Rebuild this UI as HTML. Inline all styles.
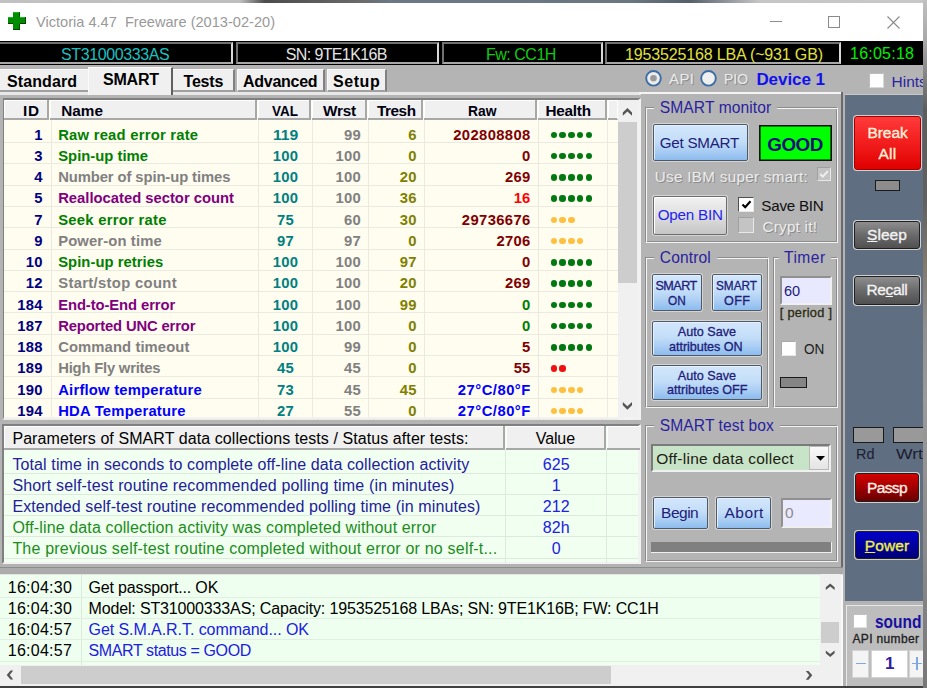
<!DOCTYPE html>
<html><head><meta charset="utf-8"><style>
*{margin:0;padding:0;box-sizing:border-box}
html,body{width:927px;height:688px;overflow:hidden;background:#8f9296}
body{position:relative;font-family:"Liberation Sans",sans-serif}
.a{position:absolute}
.t{position:absolute;white-space:pre;line-height:1}
svg{position:absolute;overflow:visible}
</style></head><body>
<div class="a" style="left:0px;top:0px;width:927px;height:3px;background:linear-gradient(90deg,#c2c2c2 0px,#bebebe 240px,#4c4c4c 265px,#6a6a6a 360px,#6c7886 390px,#6a7682 630px,#56606a 690px,#c6c6c6 760px,#c8c8c8 927px)"></div>
<div class="a" style="left:0px;top:3px;width:923px;height:683px;background:#b4b4b4"></div>
<div class="a" style="left:0px;top:686px;width:923px;height:2px;background:#404040"></div>
<div class="a" style="left:0px;top:3px;width:923px;height:38px;background:#fff"></div>
<div class="a" style="left:13px;top:12px;width:7px;height:18px;background:#008c00"></div>
<div class="a" style="left:8px;top:17px;width:18px;height:7px;background:#008c00"></div>
<div class="a" style="left:13px;top:12px;width:6px;height:1px;background:#18b818"></div>
<div class="a" style="left:8px;top:17px;width:5px;height:1px;background:#18b818"></div>
<div class="a" style="left:20px;top:17px;width:5px;height:1px;background:#18b818"></div>
<div class="a" style="left:19px;top:12px;width:1px;height:5px;background:#005000"></div>
<div class="a" style="left:19px;top:24px;width:1px;height:6px;background:#005000"></div>
<div class="a" style="left:13px;top:29px;width:7px;height:1px;background:#004000"></div>
<div class="a" style="left:8px;top:23px;width:5px;height:1px;background:#004000"></div>
<div class="a" style="left:20px;top:23px;width:6px;height:1px;background:#004000"></div>
<div class="a" style="left:25px;top:17px;width:1px;height:7px;background:#004800"></div>
<div class="t" style="left:36.00px;top:15.00px;font-size:14.6px;font-weight:normal;color:#999;letter-spacing:-0.001px;">Victoria 4.47  Freeware (2013-02-20)</div>
<div class="a" style="left:770px;top:21px;width:12px;height:1px;background:#8a8a8a"></div>
<div class="a" style="left:828px;top:16px;width:12px;height:12px;border:1px solid #8a8a8a"></div>
<svg style="left:887px;top:16px" width="13" height="13"><path d="M0.5 0.5L12.5 12.5M12.5 0.5L0.5 12.5" stroke="#8a8a8a" stroke-width="1.1"/></svg>
<div class="a" style="left:0px;top:41px;width:923px;height:24px;background:#000"></div>
<div class="a" style="left:-2px;top:42px;width:235px;height:22px;border-top:2px solid #707070;border-left:2px solid #707070;border-bottom:2px solid #a8a8a8;border-right:2px solid #d8d8d8"></div>
<div class="t" style="left:61.00px;top:47.00px;font-size:16px;font-weight:normal;color:#1cc0c0;letter-spacing:-0.380px;">ST31000333AS</div>
<div class="a" style="left:236px;top:42px;width:203px;height:22px;border-top:2px solid #707070;border-left:2px solid #707070;border-bottom:2px solid #a8a8a8;border-right:2px solid #d8d8d8"></div>
<div class="t" style="left:285.80px;top:47.00px;font-size:16px;font-weight:normal;color:#e4e4e4;letter-spacing:-0.627px;">SN: 9TE1K16B</div>
<div class="a" style="left:442px;top:42px;width:161px;height:22px;border-top:2px solid #707070;border-left:2px solid #707070;border-bottom:2px solid #a8a8a8;border-right:2px solid #d8d8d8"></div>
<div class="t" style="left:486.00px;top:47.00px;font-size:16px;font-weight:normal;color:#10cc10;letter-spacing:-0.483px;">Fw: CC1H</div>
<div class="a" style="left:605px;top:42px;width:236px;height:22px;border-top:2px solid #707070;border-left:2px solid #707070;border-bottom:2px solid #a8a8a8;border-right:2px solid #d8d8d8"></div>
<div class="t" style="left:625.00px;top:47.00px;font-size:16px;font-weight:normal;color:#e0e040;letter-spacing:-0.152px;">1953525168 LBA (~931 GB)</div>
<div class="t" style="left:850.00px;top:46.00px;font-size:16px;font-weight:normal;color:#00f000;letter-spacing:0.246px;">16:05:18</div>
<div class="a" style="left:0px;top:68.5px;width:89px;height:23.5px;background:#f0f0f0;border-bottom:2px solid #a0a0a0;border-top:1px solid #fafafa"></div>
<div class="t" style="left:7.00px;top:74.00px;font-size:16px;font-weight:bold;color:#000;letter-spacing:0.094px;">Standard</div>
<div class="a" style="left:172px;top:69px;width:63px;height:23px;background:#f0f0f0;border-bottom:2px solid #a0a0a0;border-right:2px solid #808080;border-top:1px solid #fafafa;border-left:1px solid #fafafa"></div>
<div class="t" style="left:183.60px;top:74.00px;font-size:16px;font-weight:bold;color:#000;letter-spacing:-0.227px;">Tests</div>
<div class="a" style="left:237px;top:69px;width:88px;height:23px;background:#f0f0f0;border-bottom:2px solid #a0a0a0;border-right:2px solid #808080;border-top:1px solid #fafafa;border-left:1px solid #fafafa"></div>
<div class="t" style="left:243.00px;top:74.00px;font-size:16px;font-weight:bold;color:#000;letter-spacing:-0.267px;">Advanced</div>
<div class="a" style="left:327px;top:69px;width:60px;height:23px;background:#f0f0f0;border-bottom:2px solid #a0a0a0;border-right:2px solid #808080;border-top:1px solid #fafafa;border-left:1px solid #fafafa"></div>
<div class="t" style="left:333.00px;top:74.00px;font-size:16px;font-weight:bold;color:#000;letter-spacing:0.562px;">Setup</div>
<div class="a" style="left:0px;top:92px;width:843px;height:3px;background:#e8e8e8"></div>
<div class="a" style="left:88px;top:66.5px;width:85px;height:28.5px;background:#f0f0f0;border-right:2px solid #606060;border-top:1px solid #fafafa;border-left:1px solid #fafafa"></div>
<div class="t" style="left:103.00px;top:72.00px;font-size:16px;font-weight:bold;color:#000;letter-spacing:-0.223px;">SMART</div>
<div class="a" style="left:0px;top:95px;width:641px;height:329px;background:#b4b4b4"></div>
<div class="a" style="left:3px;top:98px;width:638px;height:322px;border-top:2px solid #808080;border-left:1px solid #808080;border-right:3px solid #f2f2f2;border-bottom:3px solid #f2f2f2"></div>
<div class="a" style="left:4px;top:100px;width:614px;height:317px;background:#fffcf0"></div>
<div class="a" style="left:4px;top:100px;width:45px;height:20px;background:#f0f0f0;border-right:2px solid #a8a8a8;border-bottom:2px solid #a8a8a8;box-shadow:inset 1px 1px 0 #fff"></div>
<div class="a" style="left:50px;top:100px;width:207px;height:20px;background:#f0f0f0;border-right:2px solid #a8a8a8;border-bottom:2px solid #a8a8a8;box-shadow:inset 1px 1px 0 #fff"></div>
<div class="a" style="left:258px;top:100px;width:53px;height:20px;background:#f0f0f0;border-right:2px solid #a8a8a8;border-bottom:2px solid #a8a8a8;box-shadow:inset 1px 1px 0 #fff"></div>
<div class="a" style="left:312px;top:100px;width:55px;height:20px;background:#f0f0f0;border-right:2px solid #a8a8a8;border-bottom:2px solid #a8a8a8;box-shadow:inset 1px 1px 0 #fff"></div>
<div class="a" style="left:368px;top:100px;width:55px;height:20px;background:#f0f0f0;border-right:2px solid #a8a8a8;border-bottom:2px solid #a8a8a8;box-shadow:inset 1px 1px 0 #fff"></div>
<div class="a" style="left:424px;top:100px;width:113px;height:20px;background:#f0f0f0;border-right:2px solid #a8a8a8;border-bottom:2px solid #a8a8a8;box-shadow:inset 1px 1px 0 #fff"></div>
<div class="a" style="left:538px;top:100px;width:69px;height:20px;background:#f0f0f0;border-right:2px solid #a8a8a8;border-bottom:2px solid #a8a8a8;box-shadow:inset 1px 1px 0 #fff"></div>
<div class="a" style="left:608px;top:100px;width:10px;height:20px;background:#f0f0f0;border-right:2px solid #a8a8a8;border-bottom:2px solid #a8a8a8;box-shadow:inset 1px 1px 0 #fff;border-right:1px solid #fff"></div>
<div class="t" style="left:23.00px;top:103.00px;font-size:15.3px;font-weight:bold;color:#000010;letter-spacing:0.688px;">ID</div>
<div class="t" style="left:61.25px;top:103.00px;font-size:15.3px;font-weight:bold;color:#000010;letter-spacing:0.000px;">Name</div>
<div class="t" style="left:272.00px;top:103.00px;font-size:15.3px;font-weight:bold;color:#000010;letter-spacing:0.000px;transform:scaleX(0.8823);transform-origin:0 0;">VAL</div>
<div class="t" style="left:323.00px;top:103.00px;font-size:15.3px;font-weight:bold;color:#000010;letter-spacing:-0.240px;">Wrst</div>
<div class="t" style="left:377.00px;top:103.00px;font-size:15.3px;font-weight:bold;color:#000010;letter-spacing:-0.453px;">Tresh</div>
<div class="t" style="left:467.50px;top:103.00px;font-size:15.3px;font-weight:bold;color:#000010;letter-spacing:0.000px;transform:scaleX(0.9061);transform-origin:0 0;">Raw</div>
<div class="t" style="left:545.50px;top:103.00px;font-size:15.3px;font-weight:bold;color:#000010;letter-spacing:-0.250px;">Health</div>
<div class="a" style="left:51px;top:120px;width:1px;height:297px;background:#ebeae0"></div>
<div class="a" style="left:258px;top:120px;width:1px;height:297px;background:#ebeae0"></div>
<div class="a" style="left:312px;top:120px;width:1px;height:297px;background:#ebeae0"></div>
<div class="a" style="left:368px;top:120px;width:1px;height:297px;background:#ebeae0"></div>
<div class="a" style="left:424px;top:120px;width:1px;height:297px;background:#ebeae0"></div>
<div class="a" style="left:538px;top:120px;width:1px;height:297px;background:#ebeae0"></div>
<div class="a" style="left:607px;top:120px;width:1px;height:297px;background:#ebeae0"></div>
<div class="a" style="left:4px;top:141.9px;width:614px;height:1.0px;background:#ebeae0"></div>
<div class="t" style="left:34.27px;top:128.00px;font-size:14.8px;font-weight:bold;color:#000080;letter-spacing:0.000px;">1</div>
<div class="t" style="left:58.20px;top:128.00px;font-size:14.8px;font-weight:bold;color:#008000;letter-spacing:0.233px;">Raw read error rate</div>
<div class="t" style="left:272.66px;top:128.00px;font-size:14.8px;font-weight:bold;color:#008080;letter-spacing:0.000px;transform:scaleX(1.0593);transform-origin:0 0;">119</div>
<div class="t" style="left:344.04px;top:128.00px;font-size:14.8px;font-weight:bold;color:#808080;letter-spacing:0.191px;">99</div>
<div class="t" style="left:408.17px;top:128.00px;font-size:14.8px;font-weight:bold;color:#808000;letter-spacing:0.000px;">6</div>
<div class="t" style="left:453.23px;top:128.00px;font-size:14.8px;font-weight:bold;color:#800000;letter-spacing:0.374px;">202808808</div>
<div class="a" style="left:550.6px;top:131.7px;width:6.399999999999977px;height:6.400000000000006px;background:#007a10;border-radius:50%"></div>
<div class="a" style="left:559.4px;top:131.7px;width:6.399999999999977px;height:6.400000000000006px;background:#007a10;border-radius:50%"></div>
<div class="a" style="left:568.2px;top:131.7px;width:6.399999999999977px;height:6.400000000000006px;background:#007a10;border-radius:50%"></div>
<div class="a" style="left:577.0px;top:131.7px;width:6.399999999999977px;height:6.400000000000006px;background:#007a10;border-radius:50%"></div>
<div class="a" style="left:585.8000000000001px;top:131.7px;width:6.399999999999977px;height:6.400000000000006px;background:#007a10;border-radius:50%"></div>
<div class="a" style="left:4px;top:163.22px;width:614px;height:1.0px;background:#ebeae0"></div>
<div class="t" style="left:34.27px;top:149.00px;font-size:14.8px;font-weight:bold;color:#000080;letter-spacing:0.000px;">3</div>
<div class="t" style="left:58.20px;top:149.00px;font-size:14.8px;font-weight:bold;color:#008000;letter-spacing:0.017px;">Spin-up time</div>
<div class="t" style="left:272.66px;top:149.00px;font-size:14.8px;font-weight:bold;color:#008080;letter-spacing:0.293px;">100</div>
<div class="t" style="left:335.41px;top:149.00px;font-size:14.8px;font-weight:bold;color:#808080;letter-spacing:0.293px;">100</div>
<div class="t" style="left:408.17px;top:149.00px;font-size:14.8px;font-weight:bold;color:#808000;letter-spacing:0.000px;">0</div>
<div class="t" style="left:522.07px;top:149.00px;font-size:14.8px;font-weight:bold;color:#800000;letter-spacing:0.000px;">0</div>
<div class="a" style="left:550.6px;top:152.95px;width:6.399999999999977px;height:6.400000000000006px;background:#007a10;border-radius:50%"></div>
<div class="a" style="left:559.4px;top:152.95px;width:6.399999999999977px;height:6.400000000000006px;background:#007a10;border-radius:50%"></div>
<div class="a" style="left:568.2px;top:152.95px;width:6.399999999999977px;height:6.400000000000006px;background:#007a10;border-radius:50%"></div>
<div class="a" style="left:577.0px;top:152.95px;width:6.399999999999977px;height:6.400000000000006px;background:#007a10;border-radius:50%"></div>
<div class="a" style="left:585.8000000000001px;top:152.95px;width:6.399999999999977px;height:6.400000000000006px;background:#007a10;border-radius:50%"></div>
<div class="a" style="left:4px;top:184.54px;width:614px;height:1.0px;background:#ebeae0"></div>
<div class="t" style="left:34.27px;top:170.00px;font-size:14.8px;font-weight:bold;color:#000080;letter-spacing:0.000px;">4</div>
<div class="t" style="left:58.20px;top:170.00px;font-size:14.8px;font-weight:bold;color:#808080;letter-spacing:-0.095px;">Number of spin-up times</div>
<div class="t" style="left:272.66px;top:170.00px;font-size:14.8px;font-weight:bold;color:#008080;letter-spacing:0.293px;">100</div>
<div class="t" style="left:335.41px;top:170.00px;font-size:14.8px;font-weight:bold;color:#808080;letter-spacing:0.293px;">100</div>
<div class="t" style="left:399.74px;top:170.00px;font-size:14.8px;font-weight:bold;color:#808000;letter-spacing:0.191px;">20</div>
<div class="t" style="left:505.01px;top:170.00px;font-size:14.8px;font-weight:bold;color:#800000;letter-spacing:0.293px;">269</div>
<div class="a" style="left:550.6px;top:174.2px;width:6.399999999999977px;height:6.400000000000006px;background:#007a10;border-radius:50%"></div>
<div class="a" style="left:559.4px;top:174.2px;width:6.399999999999977px;height:6.400000000000006px;background:#007a10;border-radius:50%"></div>
<div class="a" style="left:568.2px;top:174.2px;width:6.399999999999977px;height:6.400000000000006px;background:#007a10;border-radius:50%"></div>
<div class="a" style="left:577.0px;top:174.2px;width:6.399999999999977px;height:6.400000000000006px;background:#007a10;border-radius:50%"></div>
<div class="a" style="left:585.8000000000001px;top:174.2px;width:6.399999999999977px;height:6.400000000000006px;background:#007a10;border-radius:50%"></div>
<div class="a" style="left:4px;top:205.85999999999999px;width:614px;height:1.0px;background:#ebeae0"></div>
<div class="t" style="left:34.27px;top:191.00px;font-size:14.8px;font-weight:bold;color:#000080;letter-spacing:0.000px;">5</div>
<div class="t" style="left:58.20px;top:191.00px;font-size:14.8px;font-weight:bold;color:#800080;letter-spacing:-0.007px;">Reallocated sector count</div>
<div class="t" style="left:272.66px;top:191.00px;font-size:14.8px;font-weight:bold;color:#008080;letter-spacing:0.293px;">100</div>
<div class="t" style="left:335.41px;top:191.00px;font-size:14.8px;font-weight:bold;color:#808080;letter-spacing:0.293px;">100</div>
<div class="t" style="left:399.74px;top:191.00px;font-size:14.8px;font-weight:bold;color:#808000;letter-spacing:0.191px;">36</div>
<div class="t" style="left:513.64px;top:191.00px;font-size:14.8px;font-weight:bold;color:#FF0000;letter-spacing:0.191px;">16</div>
<div class="a" style="left:550.6px;top:195.45px;width:6.399999999999977px;height:6.400000000000006px;background:#007a10;border-radius:50%"></div>
<div class="a" style="left:559.4px;top:195.45px;width:6.399999999999977px;height:6.400000000000006px;background:#007a10;border-radius:50%"></div>
<div class="a" style="left:568.2px;top:195.45px;width:6.399999999999977px;height:6.400000000000006px;background:#007a10;border-radius:50%"></div>
<div class="a" style="left:577.0px;top:195.45px;width:6.399999999999977px;height:6.400000000000006px;background:#007a10;border-radius:50%"></div>
<div class="a" style="left:585.8000000000001px;top:195.45px;width:6.399999999999977px;height:6.400000000000006px;background:#007a10;border-radius:50%"></div>
<div class="a" style="left:4px;top:227.18px;width:614px;height:1.0px;background:#ebeae0"></div>
<div class="t" style="left:34.27px;top:213.00px;font-size:14.8px;font-weight:bold;color:#000080;letter-spacing:0.000px;">7</div>
<div class="t" style="left:58.20px;top:213.00px;font-size:14.8px;font-weight:bold;color:#008000;letter-spacing:0.274px;">Seek error rate</div>
<div class="t" style="left:276.97px;top:213.00px;font-size:14.8px;font-weight:bold;color:#008080;letter-spacing:0.191px;">75</div>
<div class="t" style="left:344.04px;top:213.00px;font-size:14.8px;font-weight:bold;color:#808080;letter-spacing:0.191px;">60</div>
<div class="t" style="left:399.74px;top:213.00px;font-size:14.8px;font-weight:bold;color:#808000;letter-spacing:0.191px;">30</div>
<div class="t" style="left:461.86px;top:213.00px;font-size:14.8px;font-weight:bold;color:#800000;letter-spacing:0.371px;">29736676</div>
<div class="a" style="left:550.6px;top:216.7px;width:6.399999999999977px;height:6.400000000000006px;background:#ffc040;border-radius:50%"></div>
<div class="a" style="left:559.4px;top:216.7px;width:6.399999999999977px;height:6.400000000000006px;background:#ffc040;border-radius:50%"></div>
<div class="a" style="left:568.2px;top:216.7px;width:6.399999999999977px;height:6.400000000000006px;background:#ffc040;border-radius:50%"></div>
<div class="a" style="left:4px;top:248.5px;width:614px;height:1.0px;background:#ebeae0"></div>
<div class="t" style="left:34.27px;top:234.00px;font-size:14.8px;font-weight:bold;color:#000080;letter-spacing:0.000px;">9</div>
<div class="t" style="left:58.20px;top:234.00px;font-size:14.8px;font-weight:bold;color:#808080;letter-spacing:0.129px;">Power-on time</div>
<div class="t" style="left:276.97px;top:234.00px;font-size:14.8px;font-weight:bold;color:#008080;letter-spacing:0.191px;">97</div>
<div class="t" style="left:344.04px;top:234.00px;font-size:14.8px;font-weight:bold;color:#808080;letter-spacing:0.191px;">97</div>
<div class="t" style="left:408.17px;top:234.00px;font-size:14.8px;font-weight:bold;color:#808000;letter-spacing:0.000px;">0</div>
<div class="t" style="left:496.38px;top:234.00px;font-size:14.8px;font-weight:bold;color:#800000;letter-spacing:0.333px;">2706</div>
<div class="a" style="left:550.6px;top:237.95px;width:6.399999999999977px;height:6.400000000000006px;background:#ffc040;border-radius:50%"></div>
<div class="a" style="left:559.4px;top:237.95px;width:6.399999999999977px;height:6.400000000000006px;background:#ffc040;border-radius:50%"></div>
<div class="a" style="left:568.2px;top:237.95px;width:6.399999999999977px;height:6.400000000000006px;background:#ffc040;border-radius:50%"></div>
<div class="a" style="left:577.0px;top:237.95px;width:6.399999999999977px;height:6.400000000000006px;background:#ffc040;border-radius:50%"></div>
<div class="a" style="left:4px;top:269.82px;width:614px;height:1.0px;background:#ebeae0"></div>
<div class="t" style="left:25.84px;top:255.00px;font-size:14.8px;font-weight:bold;color:#000080;letter-spacing:0.191px;">10</div>
<div class="t" style="left:58.20px;top:255.00px;font-size:14.8px;font-weight:bold;color:#008000;letter-spacing:0.041px;">Spin-up retries</div>
<div class="t" style="left:272.66px;top:255.00px;font-size:14.8px;font-weight:bold;color:#008080;letter-spacing:0.293px;">100</div>
<div class="t" style="left:335.41px;top:255.00px;font-size:14.8px;font-weight:bold;color:#808080;letter-spacing:0.293px;">100</div>
<div class="t" style="left:399.74px;top:255.00px;font-size:14.8px;font-weight:bold;color:#808000;letter-spacing:0.191px;">97</div>
<div class="t" style="left:522.07px;top:255.00px;font-size:14.8px;font-weight:bold;color:#800000;letter-spacing:0.000px;">0</div>
<div class="a" style="left:550.6px;top:259.20000000000005px;width:6.399999999999977px;height:6.399999999999977px;background:#007a10;border-radius:50%"></div>
<div class="a" style="left:559.4px;top:259.20000000000005px;width:6.399999999999977px;height:6.399999999999977px;background:#007a10;border-radius:50%"></div>
<div class="a" style="left:568.2px;top:259.20000000000005px;width:6.399999999999977px;height:6.399999999999977px;background:#007a10;border-radius:50%"></div>
<div class="a" style="left:577.0px;top:259.20000000000005px;width:6.399999999999977px;height:6.399999999999977px;background:#007a10;border-radius:50%"></div>
<div class="a" style="left:585.8000000000001px;top:259.20000000000005px;width:6.399999999999977px;height:6.399999999999977px;background:#007a10;border-radius:50%"></div>
<div class="a" style="left:4px;top:291.14px;width:614px;height:1.0px;background:#ebeae0"></div>
<div class="t" style="left:25.84px;top:276.00px;font-size:14.8px;font-weight:bold;color:#000080;letter-spacing:0.191px;">12</div>
<div class="t" style="left:58.20px;top:276.00px;font-size:14.8px;font-weight:bold;color:#808080;letter-spacing:0.336px;">Start/stop count</div>
<div class="t" style="left:272.66px;top:276.00px;font-size:14.8px;font-weight:bold;color:#008080;letter-spacing:0.293px;">100</div>
<div class="t" style="left:335.41px;top:276.00px;font-size:14.8px;font-weight:bold;color:#808080;letter-spacing:0.293px;">100</div>
<div class="t" style="left:399.74px;top:276.00px;font-size:14.8px;font-weight:bold;color:#808000;letter-spacing:0.191px;">20</div>
<div class="t" style="left:505.01px;top:276.00px;font-size:14.8px;font-weight:bold;color:#800000;letter-spacing:0.293px;">269</div>
<div class="a" style="left:550.6px;top:280.45000000000005px;width:6.399999999999977px;height:6.399999999999977px;background:#007a10;border-radius:50%"></div>
<div class="a" style="left:559.4px;top:280.45000000000005px;width:6.399999999999977px;height:6.399999999999977px;background:#007a10;border-radius:50%"></div>
<div class="a" style="left:568.2px;top:280.45000000000005px;width:6.399999999999977px;height:6.399999999999977px;background:#007a10;border-radius:50%"></div>
<div class="a" style="left:577.0px;top:280.45000000000005px;width:6.399999999999977px;height:6.399999999999977px;background:#007a10;border-radius:50%"></div>
<div class="a" style="left:585.8000000000001px;top:280.45000000000005px;width:6.399999999999977px;height:6.399999999999977px;background:#007a10;border-radius:50%"></div>
<div class="a" style="left:4px;top:312.46px;width:614px;height:1.0px;background:#ebeae0"></div>
<div class="t" style="left:17.21px;top:298.00px;font-size:14.8px;font-weight:bold;color:#000080;letter-spacing:0.293px;">184</div>
<div class="t" style="left:58.20px;top:298.00px;font-size:14.8px;font-weight:bold;color:#800080;letter-spacing:-0.092px;">End-to-End error</div>
<div class="t" style="left:272.66px;top:298.00px;font-size:14.8px;font-weight:bold;color:#008080;letter-spacing:0.293px;">100</div>
<div class="t" style="left:335.41px;top:298.00px;font-size:14.8px;font-weight:bold;color:#808080;letter-spacing:0.293px;">100</div>
<div class="t" style="left:399.74px;top:298.00px;font-size:14.8px;font-weight:bold;color:#808000;letter-spacing:0.191px;">99</div>
<div class="t" style="left:522.07px;top:298.00px;font-size:14.8px;font-weight:bold;color:#008000;letter-spacing:0.000px;">0</div>
<div class="a" style="left:550.6px;top:301.70000000000005px;width:6.399999999999977px;height:6.399999999999977px;background:#007a10;border-radius:50%"></div>
<div class="a" style="left:559.4px;top:301.70000000000005px;width:6.399999999999977px;height:6.399999999999977px;background:#007a10;border-radius:50%"></div>
<div class="a" style="left:568.2px;top:301.70000000000005px;width:6.399999999999977px;height:6.399999999999977px;background:#007a10;border-radius:50%"></div>
<div class="a" style="left:577.0px;top:301.70000000000005px;width:6.399999999999977px;height:6.399999999999977px;background:#007a10;border-radius:50%"></div>
<div class="a" style="left:585.8000000000001px;top:301.70000000000005px;width:6.399999999999977px;height:6.399999999999977px;background:#007a10;border-radius:50%"></div>
<div class="a" style="left:4px;top:333.78px;width:614px;height:1.0px;background:#ebeae0"></div>
<div class="t" style="left:17.21px;top:319.00px;font-size:14.8px;font-weight:bold;color:#000080;letter-spacing:0.293px;">187</div>
<div class="t" style="left:58.20px;top:319.00px;font-size:14.8px;font-weight:bold;color:#800080;letter-spacing:-0.146px;">Reported UNC error</div>
<div class="t" style="left:272.66px;top:319.00px;font-size:14.8px;font-weight:bold;color:#008080;letter-spacing:0.293px;">100</div>
<div class="t" style="left:335.41px;top:319.00px;font-size:14.8px;font-weight:bold;color:#808080;letter-spacing:0.293px;">100</div>
<div class="t" style="left:408.17px;top:319.00px;font-size:14.8px;font-weight:bold;color:#808000;letter-spacing:0.000px;">0</div>
<div class="t" style="left:522.07px;top:319.00px;font-size:14.8px;font-weight:bold;color:#008000;letter-spacing:0.000px;">0</div>
<div class="a" style="left:550.6px;top:322.95000000000005px;width:6.399999999999977px;height:6.399999999999977px;background:#007a10;border-radius:50%"></div>
<div class="a" style="left:559.4px;top:322.95000000000005px;width:6.399999999999977px;height:6.399999999999977px;background:#007a10;border-radius:50%"></div>
<div class="a" style="left:568.2px;top:322.95000000000005px;width:6.399999999999977px;height:6.399999999999977px;background:#007a10;border-radius:50%"></div>
<div class="a" style="left:577.0px;top:322.95000000000005px;width:6.399999999999977px;height:6.399999999999977px;background:#007a10;border-radius:50%"></div>
<div class="a" style="left:585.8000000000001px;top:322.95000000000005px;width:6.399999999999977px;height:6.399999999999977px;background:#007a10;border-radius:50%"></div>
<div class="a" style="left:4px;top:355.09999999999997px;width:614px;height:1.0px;background:#ebeae0"></div>
<div class="t" style="left:17.21px;top:340.00px;font-size:14.8px;font-weight:bold;color:#000080;letter-spacing:0.293px;">188</div>
<div class="t" style="left:58.20px;top:340.00px;font-size:14.8px;font-weight:bold;color:#808080;letter-spacing:0.094px;">Command timeout</div>
<div class="t" style="left:272.66px;top:340.00px;font-size:14.8px;font-weight:bold;color:#008080;letter-spacing:0.293px;">100</div>
<div class="t" style="left:344.04px;top:340.00px;font-size:14.8px;font-weight:bold;color:#808080;letter-spacing:0.191px;">99</div>
<div class="t" style="left:408.17px;top:340.00px;font-size:14.8px;font-weight:bold;color:#808000;letter-spacing:0.000px;">0</div>
<div class="t" style="left:522.07px;top:340.00px;font-size:14.8px;font-weight:bold;color:#800000;letter-spacing:0.000px;">5</div>
<div class="a" style="left:550.6px;top:344.20000000000005px;width:6.399999999999977px;height:6.399999999999977px;background:#007a10;border-radius:50%"></div>
<div class="a" style="left:559.4px;top:344.20000000000005px;width:6.399999999999977px;height:6.399999999999977px;background:#007a10;border-radius:50%"></div>
<div class="a" style="left:568.2px;top:344.20000000000005px;width:6.399999999999977px;height:6.399999999999977px;background:#007a10;border-radius:50%"></div>
<div class="a" style="left:577.0px;top:344.20000000000005px;width:6.399999999999977px;height:6.399999999999977px;background:#007a10;border-radius:50%"></div>
<div class="a" style="left:585.8000000000001px;top:344.20000000000005px;width:6.399999999999977px;height:6.399999999999977px;background:#007a10;border-radius:50%"></div>
<div class="a" style="left:4px;top:376.42px;width:614px;height:1.0px;background:#ebeae0"></div>
<div class="t" style="left:17.21px;top:361.00px;font-size:14.8px;font-weight:bold;color:#000080;letter-spacing:0.293px;">189</div>
<div class="t" style="left:58.20px;top:361.00px;font-size:14.8px;font-weight:bold;color:#808080;letter-spacing:-0.204px;">High Fly writes</div>
<div class="t" style="left:276.97px;top:361.00px;font-size:14.8px;font-weight:bold;color:#008080;letter-spacing:0.191px;">45</div>
<div class="t" style="left:344.04px;top:361.00px;font-size:14.8px;font-weight:bold;color:#808080;letter-spacing:0.191px;">45</div>
<div class="t" style="left:408.17px;top:361.00px;font-size:14.8px;font-weight:bold;color:#808000;letter-spacing:0.000px;">0</div>
<div class="t" style="left:513.64px;top:361.00px;font-size:14.8px;font-weight:bold;color:#800000;letter-spacing:0.191px;">55</div>
<div class="a" style="left:550.6px;top:365.45000000000005px;width:6.399999999999977px;height:6.399999999999977px;background:#f01010;border-radius:50%"></div>
<div class="a" style="left:559.4px;top:365.45000000000005px;width:6.399999999999977px;height:6.399999999999977px;background:#f01010;border-radius:50%"></div>
<div class="a" style="left:4px;top:397.74px;width:614px;height:1.0px;background:#ebeae0"></div>
<div class="t" style="left:17.21px;top:383.00px;font-size:14.8px;font-weight:bold;color:#000080;letter-spacing:0.293px;">190</div>
<div class="t" style="left:58.20px;top:383.00px;font-size:14.8px;font-weight:bold;color:#0000FF;letter-spacing:0.212px;">Airflow temperature</div>
<div class="t" style="left:276.97px;top:383.00px;font-size:14.8px;font-weight:bold;color:#008080;letter-spacing:0.191px;">73</div>
<div class="t" style="left:344.04px;top:383.00px;font-size:14.8px;font-weight:bold;color:#808080;letter-spacing:0.191px;">45</div>
<div class="t" style="left:399.74px;top:383.00px;font-size:14.8px;font-weight:bold;color:#808000;letter-spacing:0.191px;">45</div>
<div class="t" style="left:457.80px;top:383.00px;font-size:14.8px;font-weight:bold;color:#0000FF;letter-spacing:0.488px;">27°C/80°F</div>
<div class="a" style="left:550.6px;top:386.70000000000005px;width:6.399999999999977px;height:6.399999999999977px;background:#ffc040;border-radius:50%"></div>
<div class="a" style="left:559.4px;top:386.70000000000005px;width:6.399999999999977px;height:6.399999999999977px;background:#ffc040;border-radius:50%"></div>
<div class="a" style="left:568.2px;top:386.70000000000005px;width:6.399999999999977px;height:6.399999999999977px;background:#ffc040;border-radius:50%"></div>
<div class="a" style="left:577.0px;top:386.70000000000005px;width:6.399999999999977px;height:6.399999999999977px;background:#ffc040;border-radius:50%"></div>
<div class="a" style="left:4px;top:419.06px;width:614px;height:1.0px;background:#ebeae0"></div>
<div class="t" style="left:17.21px;top:404.00px;font-size:14.8px;font-weight:bold;color:#000080;letter-spacing:0.293px;">194</div>
<div class="t" style="left:58.20px;top:404.00px;font-size:14.8px;font-weight:bold;color:#0000FF;letter-spacing:0.225px;">HDA Temperature</div>
<div class="t" style="left:276.97px;top:404.00px;font-size:14.8px;font-weight:bold;color:#008080;letter-spacing:0.191px;">27</div>
<div class="t" style="left:344.04px;top:404.00px;font-size:14.8px;font-weight:bold;color:#808080;letter-spacing:0.191px;">55</div>
<div class="t" style="left:408.17px;top:404.00px;font-size:14.8px;font-weight:bold;color:#808000;letter-spacing:0.000px;">0</div>
<div class="t" style="left:457.80px;top:404.00px;font-size:14.8px;font-weight:bold;color:#0000FF;letter-spacing:0.488px;">27°C/80°F</div>
<div class="a" style="left:550.6px;top:407.95000000000005px;width:6.399999999999977px;height:6.399999999999977px;background:#ffc040;border-radius:50%"></div>
<div class="a" style="left:559.4px;top:407.95000000000005px;width:6.399999999999977px;height:6.399999999999977px;background:#ffc040;border-radius:50%"></div>
<div class="a" style="left:568.2px;top:407.95000000000005px;width:6.399999999999977px;height:6.399999999999977px;background:#ffc040;border-radius:50%"></div>
<div class="a" style="left:577.0px;top:407.95000000000005px;width:6.399999999999977px;height:6.399999999999977px;background:#ffc040;border-radius:50%"></div>
<div class="a" style="left:618px;top:100px;width:20px;height:317px;background:#f0f0f0"></div>
<div class="a" style="left:618px;top:121.5px;width:19px;height:161.5px;background:#cdcdcd"></div>
<svg style="left:0;top:0" width="927" height="688"><polygon points="622.80,112.55 627.40,108.05 632.00,112.55 632.00,115.70 627.40,111.55 622.80,115.70" fill="#555"/></svg>
<svg style="left:0;top:0" width="927" height="688"><polygon points="622.80,405.15 627.40,409.65 632.00,405.15 632.00,402.00 627.40,406.15 622.80,402.00" fill="#555"/></svg>
<div class="a" style="left:2px;top:424px;width:639px;height:140px;border-top:2px solid #808080;border-left:2px solid #808080;border-right:3px solid #f2f2f2;border-bottom:2px solid #f2f2f2"></div>
<div class="a" style="left:4px;top:426px;width:634px;height:136px;background:#f0fff0"></div>
<div class="a" style="left:4px;top:426px;width:501px;height:24px;background:#f0f0f0;border-right:2px solid #a8a8a8;border-bottom:2px solid #a8a8a8;box-shadow:inset 1px 1px 0 #fff"></div>
<div class="a" style="left:506px;top:426px;width:100px;height:24px;background:#f0f0f0;border-right:2px solid #a8a8a8;border-bottom:2px solid #a8a8a8;box-shadow:inset 1px 1px 0 #fff"></div>
<div class="a" style="left:607px;top:426px;width:33px;height:24px;background:#f0f0f0;border-right:2px solid #a8a8a8;border-bottom:2px solid #a8a8a8;box-shadow:inset 1px 1px 0 #fff;border-right:0"></div>
<div class="t" style="left:12.40px;top:431.00px;font-size:16px;font-weight:normal;color:#000;letter-spacing:0.077px;">Parameters of SMART data collections tests / Status after tests:</div>
<div class="t" style="left:535.75px;top:431.00px;font-size:16px;font-weight:normal;color:#000;letter-spacing:-0.109px;">Value</div>
<div class="a" style="left:505px;top:450px;width:1px;height:113px;background:#dde9dd"></div>
<div class="a" style="left:606px;top:450px;width:1px;height:113px;background:#dde9dd"></div>
<div class="a" style="left:4px;top:472.8px;width:634px;height:1.0px;background:#dde9dd"></div>
<div class="t" style="left:12.40px;top:457.00px;font-size:16px;font-weight:normal;color:#24209a;letter-spacing:0.121px;">Total time in seconds to complete off-line data collection activity</div>
<div class="t" style="left:542.85px;top:457.00px;font-size:16px;font-weight:normal;color:#2020e0;letter-spacing:0.000px;">625</div>
<div class="a" style="left:4px;top:494.0px;width:634px;height:1.0px;background:#dde9dd"></div>
<div class="t" style="left:12.40px;top:478.00px;font-size:16px;font-weight:normal;color:#24209a;letter-spacing:0.162px;">Short self-test routine recommended polling time (in minutes)</div>
<div class="t" style="left:551.75px;top:478.00px;font-size:16px;font-weight:normal;color:#2020e0;letter-spacing:0.000px;">1</div>
<div class="a" style="left:4px;top:515.2px;width:634px;height:1.0px;background:#dde9dd"></div>
<div class="t" style="left:12.40px;top:499.00px;font-size:16px;font-weight:normal;color:#24209a;letter-spacing:0.102px;">Extended self-test routine recommended polling time (in minutes)</div>
<div class="t" style="left:542.85px;top:499.00px;font-size:16px;font-weight:normal;color:#2020e0;letter-spacing:0.000px;">212</div>
<div class="a" style="left:4px;top:536.4000000000001px;width:634px;height:1.0px;background:#dde9dd"></div>
<div class="t" style="left:12.40px;top:520.00px;font-size:16px;font-weight:normal;color:#1c8c1c;letter-spacing:0.130px;">Off-line data collection activity was completed without error</div>
<div class="t" style="left:542.85px;top:520.00px;font-size:16px;font-weight:normal;color:#2020e0;letter-spacing:0.000px;">82h</div>
<div class="a" style="left:4px;top:557.6px;width:634px;height:1.0px;background:#dde9dd"></div>
<div class="t" style="left:12.40px;top:541.00px;font-size:16px;font-weight:normal;color:#1c8c1c;letter-spacing:0.195px;">The previous self-test routine completed without error or no self-t...</div>
<div class="t" style="left:551.75px;top:541.00px;font-size:16px;font-weight:normal;color:#2020e0;letter-spacing:0.000px;">0</div>
<div class="a" style="left:0px;top:564px;width:843px;height:11px;background:#ababab"></div>
<div class="a" style="left:0px;top:564px;width:843px;height:3px;background:#b2b2b2"></div>
<div class="a" style="left:0px;top:567px;width:843px;height:1px;background:#8c8c8c"></div>
<div class="a" style="left:0px;top:573.5px;width:843px;height:1.5px;background:#e4e4e4"></div>
<div class="a" style="left:0px;top:575px;width:843px;height:111px;background:#f0f0f0"></div>
<div class="a" style="left:841px;top:575px;width:2px;height:111px;background:#f8f8f8"></div>
<div class="a" style="left:0px;top:575px;width:820px;height:90px;background:#efffef"></div>
<div class="a" style="left:81px;top:575px;width:1px;height:90px;background:#dde9dd"></div>
<div class="a" style="left:0px;top:596.8px;width:820px;height:1.0px;background:#e2eee2"></div>
<div class="t" style="left:7.80px;top:580.00px;font-size:16px;font-weight:normal;color:#000;letter-spacing:0.246px;">16:04:30</div>
<div class="t" style="left:88.50px;top:580.00px;font-size:16px;font-weight:normal;color:#000;letter-spacing:-0.159px;">Get passport... OK</div>
<div class="a" style="left:0px;top:618.13px;width:820px;height:1.0px;background:#e2eee2"></div>
<div class="t" style="left:7.80px;top:601.00px;font-size:16px;font-weight:normal;color:#000;letter-spacing:0.246px;">16:04:30</div>
<div class="t" style="left:88.50px;top:601.00px;font-size:16px;font-weight:normal;color:#000;letter-spacing:-0.147px;">Model: ST31000333AS; Capacity: 1953525168 LBAs; SN: 9TE1K16B; FW: CC1H</div>
<div class="a" style="left:0px;top:639.4599999999999px;width:820px;height:1.0px;background:#e2eee2"></div>
<div class="t" style="left:7.80px;top:622.00px;font-size:16px;font-weight:normal;color:#000;letter-spacing:0.246px;">16:04:57</div>
<div class="t" style="left:88.50px;top:622.00px;font-size:16px;font-weight:normal;color:#2020e0;letter-spacing:-0.066px;">Get S.M.A.R.T. command... OK</div>
<div class="a" style="left:0px;top:660.79px;width:820px;height:1.0px;background:#e2eee2"></div>
<div class="t" style="left:7.80px;top:643.00px;font-size:16px;font-weight:normal;color:#000;letter-spacing:0.246px;">16:04:57</div>
<div class="t" style="left:88.50px;top:643.00px;font-size:16px;font-weight:normal;color:#2020e0;letter-spacing:-0.383px;">SMART status = GOOD</div>
<div class="a" style="left:821px;top:574px;width:19px;height:91px;background:#f0f0f0"></div>
<div class="a" style="left:821px;top:622.3px;width:18px;height:20.5px;background:#cdcdcd"></div>
<svg style="left:0;top:0" width="927" height="688"><polygon points="825.80,587.20 830.20,583.40 834.60,587.20 834.60,589.90 830.20,586.40 825.80,589.90" fill="#555"/></svg>
<svg style="left:0;top:0" width="927" height="688"><polygon points="825.80,653.30 830.20,657.10 834.60,653.30 834.60,650.60 830.20,654.10 825.80,650.60" fill="#555"/></svg>
<div class="a" style="left:0px;top:665px;width:841px;height:20px;background:#f0f0f0"></div>
<div class="a" style="left:21.4px;top:666px;width:589.6px;height:18px;background:#cdcdcd"></div>
<svg style="left:0;top:0" width="927" height="688"><polygon points="10.50,670.60 6.70,675.00 10.50,679.40 13.20,679.40 9.70,675.00 13.20,670.60" fill="#555"/></svg>
<svg style="left:0;top:0" width="927" height="688"><polygon points="808.50,670.90 812.30,675.30 808.50,679.70 805.80,679.70 809.30,675.30 805.80,670.90" fill="#555"/></svg>
<div class="a" style="left:641px;top:92px;width:202px;height:475px;background:#b4b4b4"></div>
<div class="a" style="left:639px;top:92px;width:204px;height:2px;background:#f4f4f4"></div>
<div class="a" style="left:641px;top:567px;width:202px;height:1px;background:#8c8c8c"></div>
<div class="a" style="left:841px;top:92px;width:2px;height:475px;background:#6a6a6a"></div>
<svg style="left:645px;top:69.5px" width="17" height="17"><circle cx="8.5" cy="8.3" r="7.3" fill="#ececec" stroke="#3a6ca6" stroke-width="1.9"/><circle cx="8.5" cy="8.3" r="3.3" fill="#9a9a9a"/></svg>
<svg style="left:700px;top:69.5px" width="17" height="17"><circle cx="8.5" cy="8.3" r="7.3" fill="#efefef" stroke="#3a6ca6" stroke-width="1.9"/></svg>
<div class="t" style="left:669.00px;top:71.00px;font-size:15px;font-weight:normal;color:#000;letter-spacing:0.406px;color:#ececec;text-shadow:1px 1px 0 #8a8a8a">API</div>
<div class="t" style="left:724.00px;top:71.00px;font-size:15px;font-weight:normal;color:#000;letter-spacing:0.000px;transform:scaleX(0.9287);transform-origin:0 0;color:#ececec;text-shadow:1px 1px 0 #8a8a8a">PIO</div>
<div class="t" style="left:756.40px;top:71.00px;font-size:17px;font-weight:bold;color:#1010f0;letter-spacing:-0.057px;">Device 1</div>
<div class="a" style="left:868.5px;top:72.8px;width:15.0px;height:15.100000000000009px;background:#fff;border:1px solid #d8d8d8;border-top-color:#bcbcbc;border-left-color:#bcbcbc"></div>
<div class="t" style="left:891.50px;top:74.00px;font-size:15.5px;font-weight:normal;color:#2a1fa0;letter-spacing:0.000px;">Hints</div>
<div class="a" style="left:645px;top:107px;width:193px;height:136px;border-top:1px solid #8c8c8c;border-left:1px solid #8c8c8c;border-right:1px solid #f4f4f4;border-bottom:1px solid #f4f4f4;box-shadow:inset 1px 1px 0 #f4f4f4, inset -1px -1px 0 #8c8c8c"></div>
<div class="a" style="left:654.3px;top:105px;width:122.89999999999998px;height:5px;background:#b4b4b4"></div>
<div class="t" style="left:659.80px;top:100.00px;font-size:15.6px;font-weight:normal;color:#2a1fa0;letter-spacing:0.087px;">SMART monitor</div>
<div class="a" style="left:645px;top:257px;width:124px;height:151px;border-top:1px solid #8c8c8c;border-left:1px solid #8c8c8c;border-right:1px solid #f4f4f4;border-bottom:1px solid #f4f4f4;box-shadow:inset 1px 1px 0 #f4f4f4, inset -1px -1px 0 #8c8c8c"></div>
<div class="a" style="left:654.3px;top:255px;width:62.5px;height:5px;background:#b4b4b4"></div>
<div class="t" style="left:659.80px;top:250.00px;font-size:15.6px;font-weight:normal;color:#2a1fa0;letter-spacing:0.120px;">Control</div>
<div class="a" style="left:773px;top:257px;width:65px;height:151px;border-top:1px solid #8c8c8c;border-left:1px solid #8c8c8c;border-right:1px solid #f4f4f4;border-bottom:1px solid #f4f4f4;box-shadow:inset 1px 1px 0 #f4f4f4, inset -1px -1px 0 #8c8c8c"></div>
<div class="a" style="left:778.6px;top:255px;width:52.5px;height:5px;background:#b4b4b4"></div>
<div class="t" style="left:784.10px;top:250.00px;font-size:15.6px;font-weight:normal;color:#2a1fa0;letter-spacing:0.430px;">Timer</div>
<div class="a" style="left:645px;top:425px;width:193px;height:137px;border-top:1px solid #8c8c8c;border-left:1px solid #8c8c8c;border-right:1px solid #f4f4f4;border-bottom:1px solid #f4f4f4;box-shadow:inset 1px 1px 0 #f4f4f4, inset -1px -1px 0 #8c8c8c"></div>
<div class="a" style="left:654.3px;top:423px;width:125.5px;height:5px;background:#b4b4b4"></div>
<div class="t" style="left:659.80px;top:418.00px;font-size:15.6px;font-weight:normal;color:#2a1fa0;letter-spacing:0.079px;">SMART test box</div>
<div class="a" style="left:652px;top:123px;width:97px;height:39px;background:#d4d4d4;border-radius:3px"></div>
<div class="a" style="left:653px;top:124px;width:95px;height:37px;background:linear-gradient(#d2e6fb 0%,#c4def8 45%,#aed0f4 70%,#8cbcee 100%);border:1px solid #505a66;border-radius:2px;box-shadow:inset 1px 1px 0 #e4f0ff"></div>
<div class="t" style="left:659.80px;top:135.00px;font-size:15.2px;font-weight:normal;color:#20207a;letter-spacing:-0.274px;">Get SMART</div>
<div class="a" style="left:759px;top:125px;width:73px;height:35.5px;background:#00ff00;border:1px solid #101010;box-shadow:inset 0 0 0 0.6px #101010"></div>
<div class="t" style="left:767.30px;top:136.00px;font-size:18.8px;font-weight:bold;color:#101078;letter-spacing:-0.464px;">GOOD</div>
<div class="t" style="left:654.70px;top:169.00px;font-size:15.2px;font-weight:normal;color:#000;letter-spacing:0.323px;color:#ececec;text-shadow:1px 1px 0 #8a8a8a">Use IBM super smart:</div>
<div class="a" style="left:816.9px;top:166.9px;width:14.100000000000023px;height:14.199999999999989px;background:#c4c4c4;border:1px solid #e8e8e8;border-top-color:#a0a0a0;border-left-color:#a0a0a0"></div>
<svg style="left:818px;top:168px" width="12" height="12"><path d="M2.2 6L4.8 8.6L9.8 3.2" stroke="#efefef" stroke-width="1.9" fill="none"/></svg>
<div class="a" style="left:652px;top:194.5px;width:76px;height:41.0px;background:#d4d4d4;border-radius:3px"></div>
<div class="a" style="left:653px;top:195.5px;width:74px;height:39.0px;background:linear-gradient(#f2f2f2,#dedede 50%,#c6c6c6);border:1px solid #6c6c6c;border-radius:2px;box-shadow:inset 1px 1px 0 #fff"></div>
<div class="t" style="left:657.70px;top:207.00px;font-size:15.2px;font-weight:normal;color:#2424f0;letter-spacing:-0.200px;">Open BIN</div>
<div class="a" style="left:738.2px;top:196.7px;width:16.09999999999991px;height:15.100000000000023px;background:#fff;border:1px solid #e8e8e8;border-top-color:#505050;border-left-color:#505050"></div>
<svg style="left:739.5px;top:198px" width="13" height="13"><path d="M2.5 6.5L5.2 9.3L10.5 3.2" stroke="#000" stroke-width="2.1" fill="none"/></svg>
<div class="t" style="left:761.30px;top:198.00px;font-size:15.2px;font-weight:normal;color:#101010;letter-spacing:-0.237px;">Save BIN</div>
<div class="a" style="left:738.2px;top:217.2px;width:16.09999999999991px;height:16.200000000000017px;background:#c4c4c4;border:1px solid #e8e8e8;border-top-color:#a0a0a0;border-left-color:#a0a0a0"></div>
<div class="t" style="left:762.50px;top:219.00px;font-size:15.2px;font-weight:normal;color:#000;letter-spacing:0.259px;color:#ececec;text-shadow:1px 1px 0 #8a8a8a">Crypt it!</div>
<div class="a" style="left:651px;top:273px;width:52px;height:39px;background:#d4d4d4;border-radius:3px"></div>
<div class="a" style="left:652px;top:274px;width:50px;height:37px;background:linear-gradient(#d2e6fb 0%,#c4def8 45%,#aed0f4 70%,#8cbcee 100%);border:1px solid #505a66;border-radius:2px;box-shadow:inset 1px 1px 0 #e4f0ff"></div>
<div class="t" style="left:655.50px;top:280.00px;font-size:12.6px;font-weight:normal;color:#20207a;letter-spacing:-0.540px;-webkit-text-stroke:0.3px #20207a">SMART</div>
<div class="t" style="left:667.60px;top:295.00px;font-size:12.6px;font-weight:normal;color:#20207a;letter-spacing:0.000px;transform:scaleX(0.9370);transform-origin:0 0;-webkit-text-stroke:0.3px #20207a">ON</div>
<div class="a" style="left:711px;top:273px;width:52px;height:39px;background:#d4d4d4;border-radius:3px"></div>
<div class="a" style="left:712px;top:274px;width:50px;height:37px;background:linear-gradient(#d2e6fb 0%,#c4def8 45%,#aed0f4 70%,#8cbcee 100%);border:1px solid #505a66;border-radius:2px;box-shadow:inset 1px 1px 0 #e4f0ff"></div>
<div class="t" style="left:715.50px;top:280.00px;font-size:12.6px;font-weight:normal;color:#20207a;letter-spacing:0.000px;transform:scaleX(0.9348);transform-origin:0 0;;-webkit-text-stroke:0.3px #20207a">SMART</div>
<div class="t" style="left:724.05px;top:295.00px;font-size:12.6px;font-weight:normal;color:#20207a;letter-spacing:0.356px;;-webkit-text-stroke:0.3px #20207a">OFF</div>
<div class="a" style="left:651px;top:320.4px;width:112px;height:36.700000000000045px;background:#d4d4d4;border-radius:3px"></div>
<div class="a" style="left:652px;top:321.4px;width:110px;height:34.700000000000045px;background:linear-gradient(#d2e6fb 0%,#c4def8 45%,#aed0f4 70%,#8cbcee 100%);border:1px solid #505a66;border-radius:2px;box-shadow:inset 1px 1px 0 #e4f0ff"></div>
<div class="t" style="left:677.80px;top:326.00px;font-size:12.6px;font-weight:normal;color:#20207a;letter-spacing:0.009px;;-webkit-text-stroke:0.3px #20207a">Auto Save</div>
<div class="t" style="left:669.10px;top:341.00px;font-size:12.6px;font-weight:normal;color:#20207a;letter-spacing:-0.067px;;-webkit-text-stroke:0.3px #20207a">attributes ON</div>
<div class="a" style="left:651px;top:364.2px;width:112px;height:36.69999999999999px;background:#d4d4d4;border-radius:3px"></div>
<div class="a" style="left:652px;top:365.2px;width:110px;height:34.69999999999999px;background:linear-gradient(#d2e6fb 0%,#c4def8 45%,#aed0f4 70%,#8cbcee 100%);border:1px solid #505a66;border-radius:2px;box-shadow:inset 1px 1px 0 #e4f0ff"></div>
<div class="t" style="left:677.80px;top:370.00px;font-size:12.6px;font-weight:normal;color:#20207a;letter-spacing:0.009px;;-webkit-text-stroke:0.3px #20207a">Auto Save</div>
<div class="t" style="left:667.00px;top:384.00px;font-size:12.6px;font-weight:normal;color:#20207a;letter-spacing:-0.006px;;-webkit-text-stroke:0.3px #20207a">attributes OFF</div>
<div class="a" style="left:780.2px;top:276.3px;width:51.39999999999998px;height:29.099999999999966px;background:#e8e8ff;border:2px solid #f0f0f0;border-top-color:#909090;border-left-color:#909090"></div>
<div class="t" style="left:783.50px;top:283.00px;font-size:15.5px;font-weight:normal;color:#20207a;letter-spacing:0.000px;transform:scaleX(0.9391);transform-origin:0 0;">60</div>
<div class="t" style="left:779.80px;top:307.00px;font-size:12.8px;font-weight:normal;color:#2a2a10;letter-spacing:0.267px;;-webkit-text-stroke:0.3px #2a2a10">[ period ]</div>
<div class="a" style="left:780.7px;top:340.5px;width:15.699999999999932px;height:15.100000000000023px;background:#fff;border:1px solid #e8e8e8;border-top-color:#a8a8a8;border-left-color:#a8a8a8"></div>
<div class="t" style="left:803.50px;top:341.00px;font-size:15.5px;font-weight:normal;color:#202020;letter-spacing:0.000px;transform:scaleX(0.8731);transform-origin:0 0;">ON</div>
<div class="a" style="left:780.2px;top:377.1px;width:26.399999999999977px;height:10.799999999999955px;background:#858585;border:1px solid #1a1a1a"></div>
<div class="a" style="left:651.2px;top:443.8px;width:179.79999999999995px;height:28.5px;background:#c8e4c8;border:2px solid #f0f0f0;border-top-color:#7a7a7a;border-left-color:#7a7a7a"></div>
<div class="t" style="left:656.20px;top:451.00px;font-size:15.5px;font-weight:normal;color:#202010;letter-spacing:0.250px;">Off-line data collect</div>
<div class="a" style="left:809.4px;top:446.4px;width:19.399999999999977px;height:23.30000000000001px;background:linear-gradient(#fafafa,#e4e4e4);border:1px solid #b8b8b8"></div>
<svg style="left:815.5px;top:456px" width="10" height="6"><path d="M0 0H9L4.5 4.8Z" fill="#000"/></svg>
<div class="a" style="left:652px;top:495.8px;width:56.60000000000002px;height:34.49999999999994px;background:#d4d4d4;border-radius:3px"></div>
<div class="a" style="left:653px;top:496.8px;width:54.60000000000002px;height:32.49999999999994px;background:linear-gradient(#d2e6fb 0%,#c4def8 45%,#aed0f4 70%,#8cbcee 100%);border:1px solid #505a66;border-radius:2px;box-shadow:inset 1px 1px 0 #e4f0ff"></div>
<div class="t" style="left:661.10px;top:505.00px;font-size:15.5px;font-weight:normal;color:#20207a;letter-spacing:-0.514px;">Begin</div>
<div class="a" style="left:715.1px;top:495.8px;width:56.89999999999998px;height:34.49999999999994px;background:#d4d4d4;border-radius:3px"></div>
<div class="a" style="left:716.1px;top:496.8px;width:54.89999999999998px;height:32.49999999999994px;background:linear-gradient(#d2e6fb 0%,#c4def8 45%,#aed0f4 70%,#8cbcee 100%);border:1px solid #505a66;border-radius:2px;box-shadow:inset 1px 1px 0 #e4f0ff"></div>
<div class="t" style="left:724.60px;top:505.00px;font-size:15.5px;font-weight:normal;color:#20207a;letter-spacing:0.434px;">Abort</div>
<div class="a" style="left:780.7px;top:498.4px;width:50.89999999999998px;height:29.300000000000068px;background:#eaeaff;border:2px solid #f0f0f0;border-top-color:#909090;border-left-color:#909090"></div>
<div class="t" style="left:785.00px;top:505.00px;font-size:15.5px;font-weight:normal;color:#8c8c8c;letter-spacing:0.000px;">0</div>
<div class="a" style="left:650.8px;top:542.2px;width:181.60000000000002px;height:10.799999999999955px;background:#808080;border-bottom:1px solid #f0f0f0;border-right:1px solid #f0f0f0"></div>
<div class="a" style="left:845px;top:95px;width:78px;height:506px;background:#5f6e80"></div>
<div class="a" style="left:845px;top:94px;width:78px;height:1px;background:#c8c8c8"></div>
<div class="a" style="left:853.3px;top:115px;width:68.40000000000009px;height:55.599999999999994px;background:#d0d0d0;border-radius:4px"></div>
<div class="a" style="left:854.3px;top:116px;width:66.40000000000009px;height:53.599999999999994px;background:linear-gradient(#ff3a3a,#f42020 45%,#e00000);border:1px solid #a00000;border-radius:3px"></div>
<div class="t" style="left:867.40px;top:125.00px;font-size:15.5px;font-weight:normal;color:#fff2dc;letter-spacing:-0.025px;-webkit-text-stroke:0.35px #fff2dc">Break</div>
<div class="t" style="left:878.40px;top:146.00px;font-size:15.5px;font-weight:normal;color:#fff2dc;letter-spacing:0.233px;-webkit-text-stroke:0.35px #fff2dc">All</div>
<div class="a" style="left:875.4px;top:179.6px;width:25.100000000000023px;height:11.0px;background:#8c8c8c;border:1px solid #1a1a1a"></div>
<div class="a" style="left:853.4px;top:219.9px;width:67.5px;height:30.5px;background:#d0d0d0;border-radius:4px"></div>
<div class="a" style="left:854.4px;top:220.9px;width:65.5px;height:28.5px;background:linear-gradient(#8e8e8e,#6a6a6a 50%,#505050);border:1px solid #202020;border-radius:3px"></div>
<div class="t" style="left:867.10px;top:227.00px;font-size:15.5px;font-weight:normal;color:#f2f2f2;letter-spacing:0.011px;-webkit-text-stroke:0.35px #f2f2f2"><u>S</u>leep</div>
<div class="a" style="left:853.4px;top:275.4px;width:67.5px;height:30.600000000000023px;background:#d0d0d0;border-radius:4px"></div>
<div class="a" style="left:854.4px;top:276.4px;width:65.5px;height:28.600000000000023px;background:linear-gradient(#8e8e8e,#6a6a6a 50%,#505050);border:1px solid #202020;border-radius:3px"></div>
<div class="t" style="left:866.50px;top:282.00px;font-size:15.5px;font-weight:normal;color:#f2f2f2;letter-spacing:-0.356px;-webkit-text-stroke:0.35px #f2f2f2">Re<u>c</u>all</div>
<div class="a" style="left:852.9px;top:427.4px;width:30.800000000000068px;height:15.800000000000011px;background:#999;border:1px solid #1a1a1a"></div>
<div class="a" style="left:892.7px;top:427.4px;width:32.299999999999955px;height:15.800000000000011px;background:#999;border:1px solid #1a1a1a"></div>
<div class="t" style="left:855.80px;top:446.00px;font-size:15.5px;font-weight:normal;color:#1a2030;letter-spacing:0.000px;transform:scaleX(0.9330);transform-origin:0 0;">Rd</div>
<div class="t" style="left:895.70px;top:446.00px;font-size:15.5px;font-weight:normal;color:#1a2030;letter-spacing:0.000px;transform:scaleX(1.1331);transform-origin:0 0;">Wrt</div>
<div class="a" style="left:853.6px;top:472.4px;width:66.89999999999998px;height:30.400000000000034px;background:#d0d0d0;border-radius:4px"></div>
<div class="a" style="left:854.6px;top:473.4px;width:64.89999999999998px;height:28.400000000000034px;background:linear-gradient(#d40000,#a00000 50%,#680000);border:1px solid #202020;border-radius:3px"></div>
<div class="t" style="left:867.00px;top:480.00px;font-size:15.5px;font-weight:normal;color:#fff0e8;letter-spacing:-0.623px;-webkit-text-stroke:0.35px #fff0e8">Passp</div>
<div class="a" style="left:853.6px;top:530.3px;width:66.89999999999998px;height:30.0px;background:#d0d0d0;border-radius:4px"></div>
<div class="a" style="left:854.6px;top:531.3px;width:64.89999999999998px;height:28.0px;background:linear-gradient(#0000c8,#0000a0 50%,#000078);border:1px solid #202020;border-radius:3px"></div>
<div class="t" style="left:864.80px;top:538.00px;font-size:15.5px;font-weight:normal;color:#f0f040;letter-spacing:0.116px;-webkit-text-stroke:0.35px #f0f040"><u>P</u>ower</div>
<div class="a" style="left:843px;top:601px;width:80px;height:85px;background:#b4b4b4"></div>
<div class="a" style="left:846px;top:605px;width:77px;height:81px;background:#bdbdbd;border-top:1px solid #e8e8e8;border-left:1px solid #e8e8e8"></div>
<div class="a" style="left:852.5px;top:614.2px;width:14.899999999999977px;height:14.299999999999955px;background:#fff;border:1px solid #e0e0e0;border-top-color:#c0c0c0;border-left-color:#c0c0c0"></div>
<div class="t" style="left:874.90px;top:614.00px;font-size:17.5px;font-weight:bold;color:#1a10a0;letter-spacing:0.000px;transform:scaleX(0.8857);transform-origin:0 0;">sound</div>
<div class="t" style="left:852.50px;top:633.00px;font-size:12px;font-weight:normal;color:#202020;letter-spacing:0.347px;;-webkit-text-stroke:0.3px #202020">API number</div>
<div class="a" style="left:851.7px;top:649.5px;width:17.5px;height:28.799999999999955px;background:#f4f4f4;border:1px solid #d4d4d4"></div>
<div class="a" style="left:870.6px;top:649.5px;width:37.5px;height:28.799999999999955px;background:#fff;border:1px solid #d4d4d4"></div>
<div class="a" style="left:909.1px;top:649.5px;width:20.899999999999977px;height:28.799999999999955px;background:#f4f4f4;border:1px solid #d4d4d4"></div>
<div class="a" style="left:855.6px;top:662.8px;width:10.0px;height:1.2000000000000455px;background:#80a8e0"></div>
<div class="t" style="left:884.90px;top:655.00px;font-size:17px;font-weight:bold;color:#3020a0;letter-spacing:0.000px;">1</div>
<div class="a" style="left:912px;top:663px;width:10px;height:1.2000000000000455px;background:#80a8e0"></div>
<div class="a" style="left:916.4px;top:657px;width:1.2000000000000455px;height:13px;background:#80a8e0"></div>
<div class="a" style="left:923px;top:0px;width:4px;height:688px;background:linear-gradient(#c0c0c0 0px,#a8a8a8 40px,#8a8a8a 70px,#5c5c5c 110px,#606060 200px,#7e776c 260px,#909090 330px,#9a9a9a 400px,#8a8a8a 550px,#777 688px)"></div>
</body></html>
